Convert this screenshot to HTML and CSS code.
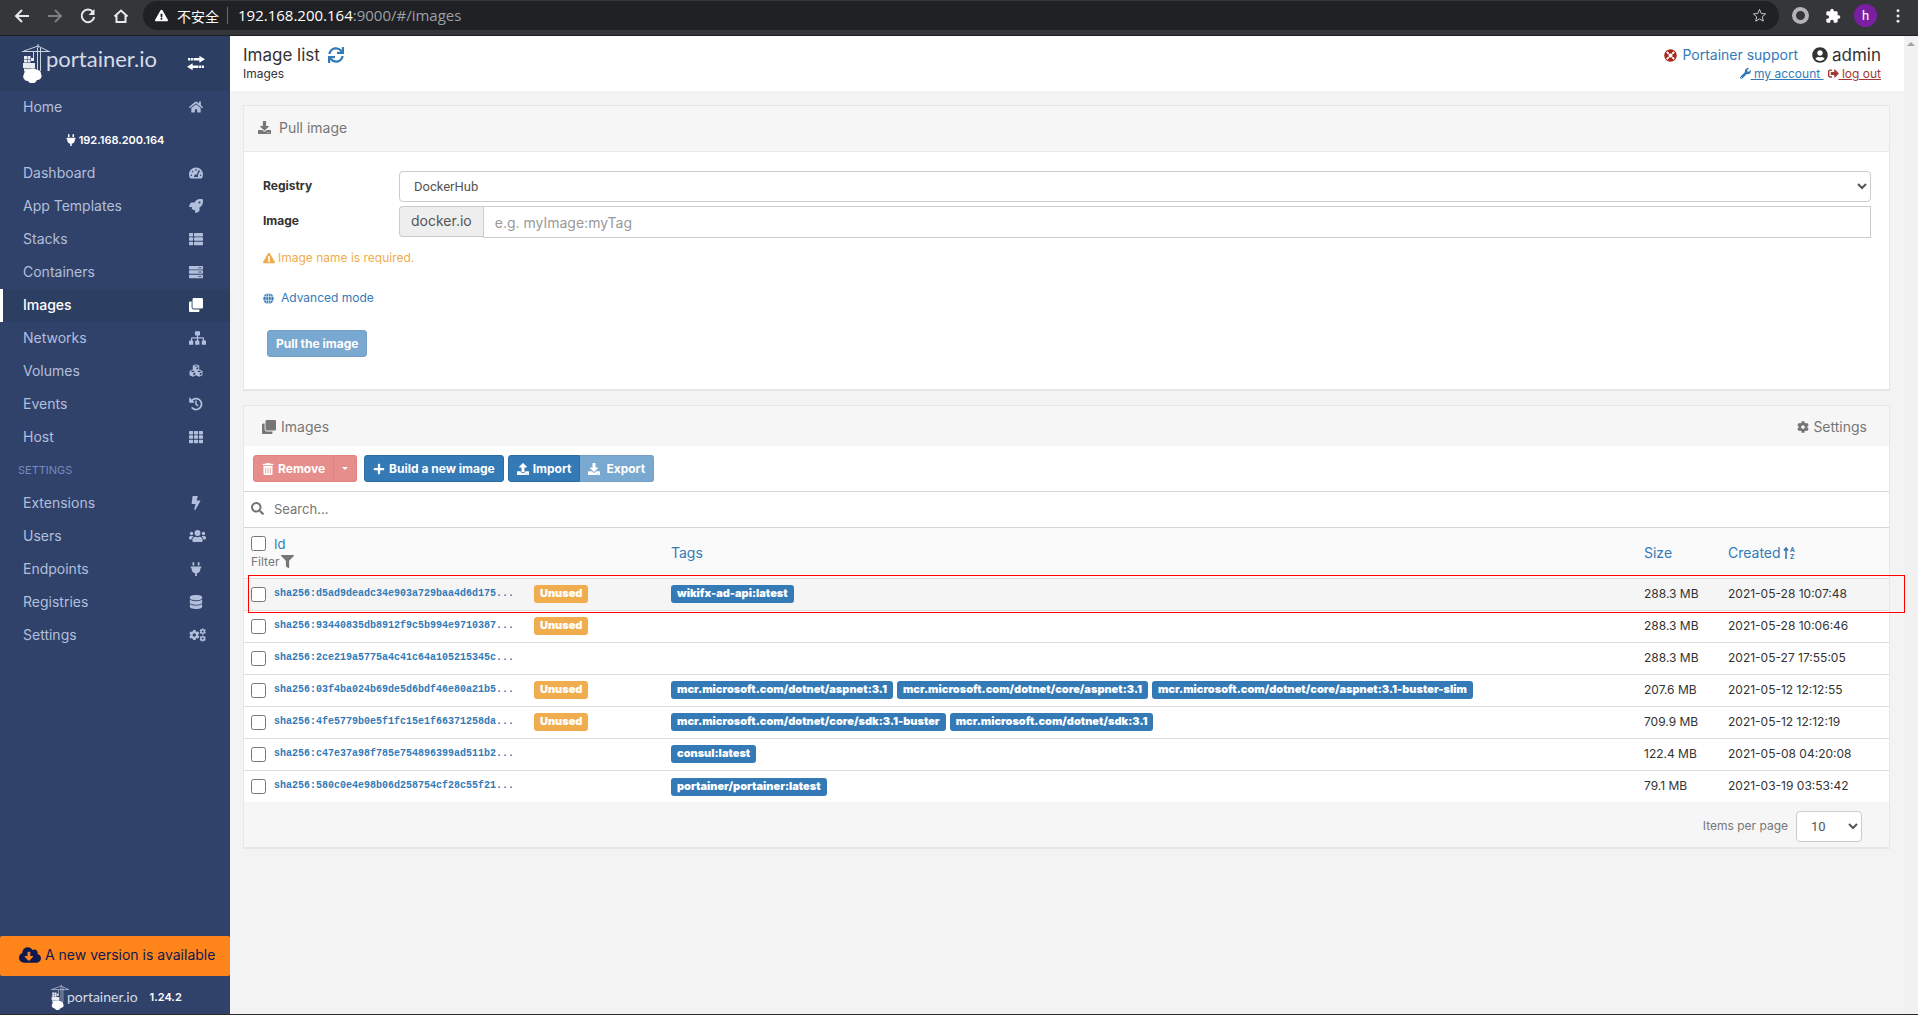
FILE: index.html
```html
<!DOCTYPE html>
<html lang="en">
<head>
<meta charset="utf-8">
<title>Portainer</title>
<link rel="stylesheet" href="styles.css">
</head>
<body>
<svg class="sprite" aria-hidden="true">
  <symbol id="i-home" viewBox="0 0 576 512"><path d="M280.37 148.26L96 300.11V464a16 16 0 0 0 16 16l112.06-.29a16 16 0 0 0 15.92-16V368a16 16 0 0 1 16-16h64a16 16 0 0 1 16 16v95.64a16 16 0 0 0 16 16.05L464 480a16 16 0 0 0 16-16V300L295.67 148.26a12.19 12.19 0 0 0-15.3 0zM571.6 251.47L488 182.56V44.05a12 12 0 0 0-12-12h-56a12 12 0 0 0-12 12v72.61L318.47 43a48 48 0 0 0-61 0L4.34 251.47a12 12 0 0 0-1.6 16.9l25.5 31A12 12 0 0 0 45.15 301l235.22-193.74a12.19 12.19 0 0 1 15.3 0L530.9 301a12 12 0 0 0 16.9-1.6l25.5-31a12 12 0 0 0-1.7-16.93z"/></symbol>
  <symbol id="i-exchange" viewBox="0 0 512 512"><path d="M30 184v-68h60v68zM108 184v-68h60v68zM186 184v-68h166V50l160 100-160 100v-66zM482 396v-68h-60v68zM404 396v-68h-60v68zM326 396v-68H160v-66L0 362l160 100v-66z"/></symbol>
  <symbol id="i-sync" viewBox="0 0 512 512"><path d="M440.65 12.57l4 82.77A247.16 247.16 0 0 0 255.83 8C134.73 8 33.91 94.92 12.29 209.82A12 12 0 0 0 24.09 224h49.05a12 12 0 0 0 11.67-9.26 175.91 175.91 0 0 1 317-56.94l-101.46-4.86a12 12 0 0 0-12.57 12v47.41a12 12 0 0 0 12 12H500a12 12 0 0 0 12-12V12a12 12 0 0 0-12-12h-47.37a12 12 0 0 0-11.98 12.57zM255.83 432a175.61 175.61 0 0 1-146-77.8l101.8 4.87a12 12 0 0 0 12.57-12v-47.4a12 12 0 0 0-12-12H12a12 12 0 0 0-12 12V500a12 12 0 0 0 12 12h47.35a12 12 0 0 0 12-12.6l-4.15-82.57A247.17 247.17 0 0 0 255.83 504c121.11 0 221.93-86.92 243.55-201.82a12 12 0 0 0-11.8-14.18h-49.05a12 12 0 0 0-11.67 9.26A175.86 175.86 0 0 1 255.83 432z"/></symbol>
  <symbol id="i-dash" viewBox="0 0 576 512"><path fill-rule="evenodd" d="M288 32C129 32 0 161 0 320c0 53 14 102 39 145 6 9 16 15 27 15h444c11 0 21-6 27-15 25-43 39-92 39-145C576 161 447 32 288 32zM288 96a32 32 0 1 1 0 64 32 32 0 0 1 0-64zM96 384a32 32 0 1 1 0-64 32 32 0 0 1 0 64zM144 224a32 32 0 1 1 0-64 32 32 0 0 1 0 64zM391 134l45 16-73 221c7 12 9 29 4 45H212c-10-50 22-96 76-96 11 0 22 3 32 7zM480 384a32 32 0 1 1 0-64 32 32 0 0 1 0 64zM434 224a32 32 0 1 1 0-64 32 32 0 0 1 0 64z"/></symbol>
  <symbol id="i-rocket" viewBox="0 0 512 512"><path d="M505.12 19.09c-1.19-5.53-6.66-11-12.21-12.18C460.72 0 435.5 0 410.4 0 307.18 0 245.27 55.2 199.05 128H94.84c-16.35 0-35.56 11.88-42.89 26.48L2.52 253.3A28.4 28.4 0 0 0 0 264a24 24 0 0 0 24 24h103.8l-22.47 22.47c-11.36 11.36-13 32.26 0 45.25l50.9 50.9c11.16 11.2 32.16 13.16 45.28 0L224 384.16V488a24 24 0 0 0 24 24 28.56 28.56 0 0 0 10.7-2.52l98.73-49.39c14.63-7.3 26.51-26.5 26.51-42.86V312.8c72.6-46.31 128.03-108.4 128.03-211.1.1-25.2.1-50.4-6.85-82.61zM384 168a40 40 0 1 1 40-40 40 40 0 0 1-40 40z"/></symbol>
  <symbol id="i-list" viewBox="0 0 512 512"><path d="M24 32h102q24 0 24 24v80q0 24-24 24H24q-24 0-24-24V56q0-24 24-24zM206 32h282q24 0 24 24v80q0 24-24 24H206q-24 0-24-24V56q0-24 24-24zM24 192h102q24 0 24 24v80q0 24-24 24H24q-24 0-24-24v-80q0-24 24-24zM206 192h282q24 0 24 24v80q0 24-24 24H206q-24 0-24-24v-80q0-24 24-24zM24 352h102q24 0 24 24v80q0 24-24 24H24q-24 0-24-24v-80q0-24 24-24zM206 352h282q24 0 24 24v80q0 24-24 24H206q-24 0-24-24v-80q0-24 24-24z"/></symbol>
  <symbol id="i-server" viewBox="0 0 512 512"><path fill-rule="evenodd" d="M24 32h464q24 0 24 24v80q0 24-24 24H24q-24 0-24-24V56q0-24 24-24zM408 96a24 24 0 1 0 48 0 24 24 0 0 0-48 0zM344 96a24 24 0 1 0 48 0 24 24 0 0 0-48 0zM24 192h464q24 0 24 24v80q0 24-24 24H24q-24 0-24-24v-80q0-24 24-24zM408 256a24 24 0 1 0 48 0 24 24 0 0 0-48 0zM344 256a24 24 0 1 0 48 0 24 24 0 0 0-48 0zM24 352h464q24 0 24 24v80q0 24-24 24H24q-24 0-24-24v-80q0-24 24-24zM408 416a24 24 0 1 0 48 0 24 24 0 0 0-48 0zM344 416a24 24 0 1 0 48 0 24 24 0 0 0-48 0z"/></symbol>
  <symbol id="i-clone" viewBox="0 0 512 512"><path d="M464 0c26.5 0 48 21.5 48 48v288c0 26.5-21.5 48-48 48H176c-26.5 0-48-21.5-48-48V48c0-26.5 21.5-48 48-48h288M176 416c-44 0-80-36-80-80V128H48c-26.5 0-48 21.5-48 48v288c0 26.5 21.5 48 48 48h288c26.5 0 48-21.5 48-48v-48H176z"/></symbol>
  <symbol id="i-sitemap" viewBox="0 0 640 512"><path d="M248 0h144q24 0 24 24v112q0 24-24 24h-48v64h176q48 0 48 48v80h48q24 0 24 24v112q0 24-24 24H504q-24 0-24-24V376q0-24 24-24h16v-80H344v80h24q24 0 24 24v112q0 24-24 24H256q-24 0-24-24V376q0-24 24-24h40v-80H120v80h16q24 0 24 24v112q0 24-24 24H24q-24 0-24-24V376q0-24 24-24h48v-80q0-48 48-48h176v-64h-48q-24 0-24-24V24q0-24 24-24z"/></symbol>
  <symbol id="i-cubes" viewBox="0 0 512 512"><path fill-rule="evenodd" d="M256 8l118 46v150l118 48v156l-118 60-118-58-118 58L20 408V252l118-48V54zM256 44l-76 30 76 30 76-30zM276 138v72l64-26v-72zM138 240l-78 30 78 32 78-32zM158 338v82l72-36v-76zM374 240l-78 30 78 32 78-32zM394 338v82l64-34v-74z"/></symbol>
  <symbol id="i-history" viewBox="0 0 512 512"><path d="M90 150A200 200 0 1 1 116 398" fill="none" stroke="currentColor" stroke-width="64" stroke-linecap="round"/><path d="M8 24q0-16 14-10l172 172q8 22-14 22H24q-16 0-16-16zM228 128h56v122l66 52-34 44-88-68z"/></symbol>
  <symbol id="i-th" viewBox="0 0 512 512"><path d="M24 32h102q24 0 24 24v80q0 24-24 24H24q-24 0-24-24V56q0-24 24-24zM205 32h102q24 0 24 24v80q0 24-24 24H205q-24 0-24-24V56q0-24 24-24zM386 32h102q24 0 24 24v80q0 24-24 24H386q-24 0-24-24V56q0-24 24-24zM24 192h102q24 0 24 24v80q0 24-24 24H24q-24 0-24-24v-80q0-24 24-24zM205 192h102q24 0 24 24v80q0 24-24 24H205q-24 0-24-24v-80q0-24 24-24zM386 192h102q24 0 24 24v80q0 24-24 24H386q-24 0-24-24v-80q0-24 24-24zM24 352h102q24 0 24 24v80q0 24-24 24H24q-24 0-24-24v-80q0-24 24-24zM205 352h102q24 0 24 24v80q0 24-24 24H205q-24 0-24-24v-80q0-24 24-24zM386 352h102q24 0 24 24v80q0 24-24 24H386q-24 0-24-24v-80q0-24 24-24z"/></symbol>
  <symbol id="i-bolt" viewBox="0 0 320 512"><path d="M296 160H180.6l42.6-129.8C227.2 15 215.7 0 200 0H56C44 0 33.8 8.9 32.2 20.8l-32 240C-1.7 275.2 9.5 288 24 288h118.7L96.6 482.5c-3.6 15.2 8 29.5 23.3 29.5 8.4 0 16.4-4.4 20.8-12l176-304c9.3-15.9-2.2-36-20.7-36z"/></symbol>
  <symbol id="i-users" viewBox="0 0 640 512"><path d="M96 224a64 64 0 1 0 0-128 64 64 0 0 0 0 128zM544 224a64 64 0 1 0 0-128 64 64 0 0 0 0 128zM320 256a112 112 0 1 0 0-224 112 112 0 0 0 0 224zM64 256h64c18 0 34 7 45 19-40 22-69 62-75 109H32c-18 0-32-14-32-32v-32c0-35 29-64 64-64zM576 256h-64c-18 0-34 7-45 19 40 22 69 62 75 109h66c18 0 32-14 32-32v-32c0-35-29-64-64-64zM243 288c48 22 106 22 154 0 64 0 115 52 115 115v29c0 26-22 48-48 48H176c-26 0-48-22-48-48v-29c0-63 51-115 115-115z"/></symbol>
  <symbol id="i-plug" viewBox="0 0 384 512"><path d="M320 32a32 32 0 0 0-64 0v96h64zm48 128H16a16 16 0 0 0-16 16v32a16 16 0 0 0 16 16h16v32a160 160 0 0 0 128 156.8V512h64v-99.2A160 160 0 0 0 352 256v-32h16a16 16 0 0 0 16-16v-32a16 16 0 0 0-16-16zM128 32a32 32 0 0 0-64 0v96h64z"/></symbol>
  <symbol id="i-db" viewBox="0 0 448 512"><path d="M448 73.143v45.714C448 159.143 347.667 192 224 192S0 159.143 0 118.857V73.143C0 32.857 100.333 0 224 0s224 32.857 224 73.143zM448 176v102.857C448 319.143 347.667 352 224 352S0 319.143 0 278.857V176c48.125 33.143 136.208 48.572 224 48.572S399.874 209.143 448 176zm0 160v102.857C448 479.143 347.667 512 224 512S0 479.143 0 438.857V336c48.125 33.143 136.208 48.572 224 48.572S399.874 369.143 448 336z"/></symbol>
  <symbol id="i-cog" viewBox="0 0 512 512"><path d="M487.4 315.7l-42.6-24.6c4.3-23.2 4.3-47 0-70.2l42.6-24.6c4.9-2.8 7.1-8.6 5.5-14-11.1-35.6-30-67.8-54.7-94.6-3.8-4.1-10-5.1-14.8-2.3L380.8 110c-17.9-15.4-38.5-27.3-60.8-35.1V25.8c0-5.6-3.9-10.5-9.4-11.7-36.7-8.2-74.3-7.8-109.2 0-5.5 1.2-9.4 6.1-9.4 11.7V75c-22.2 7.9-42.8 19.8-60.8 35.1L88.7 85.5c-4.9-2.8-11-1.9-14.8 2.3-24.7 26.7-43.6 58.9-54.7 94.6-1.7 5.4.6 11.2 5.5 14L67.3 221c-4.3 23.2-4.3 47 0 70.2l-42.6 24.6c-4.9 2.8-7.1 8.6-5.5 14 11.1 35.6 30 67.8 54.7 94.6 3.8 4.1 10 5.1 14.8 2.3l42.6-24.6c17.9 15.4 38.5 27.3 60.8 35.1v49.2c0 5.6 3.9 10.5 9.4 11.7 36.7 8.2 74.3 7.8 109.2 0 5.5-1.2 9.4-6.1 9.4-11.7v-49.2c22.2-7.9 42.8-19.8 60.8-35.1l42.6 24.6c4.9 2.8 11 1.9 14.8-2.3 24.7-26.7 43.6-58.9 54.7-94.6 1.5-5.5-.7-11.3-5.6-14.1zM256 336c-44.1 0-80-35.9-80-80s35.9-80 80-80 80 35.9 80 80-35.9 80-80 80z"/></symbol>
  <symbol id="i-cogs" viewBox="0 0 640 512"><use href="#i-cog" x="0" y="56" width="400" height="400"/><use href="#i-cog" x="392" y="0" width="248" height="248"/><use href="#i-cog" x="392" y="264" width="248" height="248"/></symbol>
  <symbol id="i-download" viewBox="0 0 512 512"><path d="M216 0h80c13.3 0 24 10.7 24 24v168h87.7c17.8 0 26.7 21.5 14.1 34.1L269.7 378.3c-7.5 7.5-19.8 7.5-27.3 0L90.1 226.1c-12.6-12.6-3.7-34.1 14.1-34.1H192V24c0-13.3 10.7-24 24-24zm296 376v112c0 13.3-10.7 24-24 24H24c-13.3 0-24-10.7-24-24V376c0-13.3 10.7-24 24-24h146.7l49 49c20.1 20.1 52.5 20.1 72.6 0l49-49H488c13.3 0 24 10.7 24 24zm-124 88c0-11-9-20-20-20s-20 9-20 20 9 20 20 20 20-9 20-20zm64 0c0-11-9-20-20-20s-20 9-20 20 9 20 20 20 20-9 20-20z"/></symbol>
  <symbol id="i-upload" viewBox="0 0 512 512"><path d="M296 384h-80c-13.3 0-24-10.7-24-24V192h-87.7c-17.8 0-26.7-21.5-14.1-34.1L242.3 5.7c7.5-7.5 19.8-7.5 27.3 0l152.2 152.2c12.6 12.6 3.7 34.1-14.1 34.1H320v168c0 13.3-10.7 24-24 24zm216-8v112c0 13.3-10.7 24-24 24H24c-13.3 0-24-10.7-24-24V376c0-13.3 10.7-24 24-24h136v8c0 30.9 25.1 56 56 56h80c30.9 0 56-25.1 56-56v-8h136c13.3 0 24 10.7 24 24zm-124 88c0-11-9-20-20-20s-20 9-20 20 9 20 20 20 20-9 20-20zm64 0c0-11-9-20-20-20s-20 9-20 20 9 20 20 20 20-9 20-20z"/></symbol>
  <symbol id="i-warn" viewBox="0 0 576 512"><path d="M569.517 440.013C587.975 472.007 564.806 512 527.94 512H48.054c-36.937 0-59.999-40.055-41.577-71.987L246.423 23.985c18.467-32.009 64.72-31.951 83.154 0l239.94 416.028zM288 354c-25.405 0-46 20.595-46 46s20.595 46 46 46 46-20.595 46-46-20.595-46-46-46zm-43.673-165.346l7.418 136c.347 6.364 5.609 11.346 11.982 11.346h48.546c6.373 0 11.635-4.982 11.982-11.346l7.418-136c.375-6.874-5.098-12.654-11.982-12.654h-63.383c-6.884 0-12.356 5.78-11.981 12.654z"/></symbol>
  <symbol id="i-globe" viewBox="0 0 16 16"><circle cx="8" cy="8" r="7.6"/><path d="M8 0v16M0 5.3h16M0 10.7h16" fill="none" stroke="#fff" stroke-width=".9"/><ellipse cx="8" cy="8" rx="3.8" ry="7.6" fill="none" stroke="#fff" stroke-width=".9"/></symbol>
  <symbol id="i-search" viewBox="0 0 512 512"><path d="M505 442.7L405.3 343c-4.5-4.5-10.6-7-17-7H372c27.6-35.3 44-79.7 44-128C416 93.1 322.9 0 208 0S0 93.1 0 208s93.1 208 208 208c48.3 0 92.7-16.4 128-44v16.3c0 6.4 2.5 12.5 7 17l99.7 99.7c9.4 9.4 24.6 9.4 33.9 0l28.3-28.3c9.4-9.4 9.4-24.6.1-34zM208 336c-70.7 0-128-57.2-128-128 0-70.7 57.2-128 128-128 70.7 0 128 57.2 128 128 0 70.7-57.2 128-128 128z"/></symbol>
  <symbol id="i-filter" viewBox="0 0 512 512"><path d="M487.976 0H24.028C2.71 0-8.047 25.866 7.058 40.971L192 225.941V432c0 7.831 3.821 15.17 10.237 19.662l80 55.98C298.02 518.69 320 507.493 320 487.98V225.941l184.947-184.97C520.021 25.896 509.338 0 487.976 0z"/></symbol>
  <symbol id="i-plus" viewBox="0 0 448 512"><path d="M416 208H272V64c0-17.7-14.3-32-32-32h-32c-17.7 0-32 14.3-32 32v144H32c-17.7 0-32 14.3-32 32v32c0 17.7 14.3 32 32 32h144v144c0 17.7 14.3 32 32 32h32c17.7 0 32-14.3 32-32V304h144c17.7 0 32-14.3 32-32v-32c0-17.7-14.3-32-32-32z"/></symbol>
  <symbol id="i-trash" viewBox="0 0 448 512"><path d="M32 464a48 48 0 0 0 48 48h288a48 48 0 0 0 48-48V128H32zm272-256a16 16 0 0 1 32 0v224a16 16 0 0 1-32 0zm-96 0a16 16 0 0 1 32 0v224a16 16 0 0 1-32 0zm-96 0a16 16 0 0 1 32 0v224a16 16 0 0 1-32 0zM432 32H312l-9.4-18.7A24 24 0 0 0 281.1 0H166.8a23.72 23.72 0 0 0-21.4 13.3L136 32H16A16 16 0 0 0 0 48v32a16 16 0 0 0 16 16h416a16 16 0 0 0 16-16V48a16 16 0 0 0-16-16z"/></symbol>
  <symbol id="i-user" viewBox="0 0 496 512"><path d="M248 8C111 8 0 119 0 256s111 248 248 248 248-111 248-248S385 8 248 8zm0 96c48.6 0 88 39.4 88 88s-39.4 88-88 88-88-39.4-88-88 39.4-88 88-88zm0 344c-58.7 0-111.3-26.6-146.5-68.2 18.8-35.4 55.6-59.8 98.5-59.8 2.4 0 4.8.4 7.1 1.1 13 4.2 26.6 6.9 40.9 6.9 14.3 0 28-2.7 40.9-6.9 2.3-.7 4.7-1.1 7.1-1.1 42.9 0 79.7 24.4 98.5 59.8C359.3 421.4 306.7 448 248 448z"/></symbol>
  <symbol id="i-wrench" viewBox="0 0 512 512"><path d="M507.73 109.1c-2.24-9.03-13.54-12.09-20.12-5.51l-74.36 74.36-67.88-11.31-11.31-67.88 74.36-74.36c6.62-6.62 3.43-17.9-5.66-20.16-47.38-11.74-99.55.91-136.58 37.93-39.64 39.64-50.55 97.1-34.05 147.2L18.74 402.76c-24.99 24.99-24.99 65.51 0 90.5 24.99 24.99 65.51 24.99 90.5 0l213.21-213.21c50.12 16.71 107.47 5.68 147.37-34.22 37.07-37.07 49.7-89.32 37.91-136.73zM64 472c-13.25 0-24-10.75-24-24 0-13.26 10.75-24 24-24s24 10.74 24 24c0 13.25-10.75 24-24 24z"/></symbol>
  <symbol id="i-logout" viewBox="0 0 512 512"><path d="M497 273L329 441c-15 15-41 4.5-41-17v-96H152c-13.3 0-24-10.7-24-24v-96c0-13.3 10.7-24 24-24h136V88c0-21.4 25.9-32 41-17l168 168c9.3 9.4 9.3 24.6 0 34zM192 436v-40c0-6.6-5.4-12-12-12H96c-17.7 0-32-14.3-32-32V160c0-17.7 14.3-32 32-32h84c6.6 0 12-5.4 12-12V76c0-6.6-5.4-12-12-12H96c-53 0-96 43-96 96v192c0 53 43 96 96 96h84c6.6 0 12-5.4 12-12z"/></symbol>
  <symbol id="i-ring" viewBox="0 0 16 16"><circle cx="8" cy="8" r="7.7"/><path d="M3.4 3.4l2.6 2.600M12.600 3.400L10 6M3.400 12.600L6 10M12.600 12.600L10 10" fill="none" stroke="#fff" stroke-width="2.200"/><circle cx="8" cy="8" r="2.400" fill="#fff"/></symbol>
  <symbol id="i-cloud" viewBox="0 0 640 512"><path d="M537.6 226.6c4.1-10.7 6.4-22.4 6.4-34.6 0-53-43-96-96-96-19.7 0-38.1 6-53.3 16.2C367 64.2 315.3 32 256 32c-88.4 0-160 71.6-160 160 0 2.7.1 5.4.2 8.1C40.2 219.8 0 273.2 0 336c0 79.5 64.5 144 144 144h368c70.7 0 128-57.3 128-128 0-61.9-44-113.6-102.4-125.4zm-132.9 88.7L299.3 420.7c-6.2 6.2-16.4 6.2-22.6 0L171.3 315.3c-10.1-10.1-2.9-27.3 11.3-27.3H248V176c0-8.8 7.2-16 16-16h48c8.8 0 16 7.2 16 16v112h65.4c14.2 0 21.4 17.2 11.3 27.3z"/></symbol>
  <symbol id="i-crane" viewBox="0 0 28 40"><path d="M16 1v4M0 8.500h28M2 8L16 3l11 5.500M15.500 5v23M18.500 5v23M11.500 9v6" fill="none" stroke="currentColor" stroke-width="1"/><path d="M2 13h3v3H2zM5.500 13h3v3h-3zM9 15h3v3H9zM2 16.500h3v3H2zM5.500 16.500h3v3h-3zM1 20h12v5H1zM2 25.500h10v3H2z" fill="#e8ebf2"/><path d="M6 38a4.500 4.500 0 0 1-4-7 4.500 4.500 0 0 1 6-4 5 5 0 0 1 7 0 4 4 0 0 1 4 4 4 4 0 0 1-4 6 5 5 0 0 1-9 1z" fill="#fff"/></symbol>
</svg>

<header class="browser">
  <button class="nav-btn" aria-label="Back"><svg viewBox="0 0 16 16"><path d="M15 8H2M8 2L2 8l6 6"/></svg></button>
  <button class="nav-btn off" aria-label="Forward"><svg viewBox="0 0 16 16"><path d="M1 8h13M8 2l6 6-6 6"/></svg></button>
  <button class="nav-btn" aria-label="Reload"><svg viewBox="0 0 16 16"><path d="M13 4A6.3 6.3 0 1 0 14.2 9"/><path d="M14.500 1v6h-6z" fill="currentColor" stroke="none"/></svg></button>
  <button class="nav-btn" aria-label="Home page"><svg viewBox="0 0 16 16"><path d="M1.500 8.500L8 2.500l6.500 6M3.500 7.500V14h9V7.500"/></svg></button>
  <div class="address">
    <svg class="icon addr-warn"><use href="#i-warn"/></svg>
    <span class="insecure">不安全</span>
    <span class="url"><b>192.168.200.164</b>:9000/#/images</span>
    <svg class="star" viewBox="0 0 16 16"><path d="M8 1.500l1.900 4.400 4.600.4-3.500 3.100 1 4.600-4-2.400-4 2.400 1-4.600L1.500 6.300l4.600-.4z"/></svg>
  </div>
  <span class="ext-ring"></span>
  <svg class="puzzle" viewBox="0 0 24 24"><path d="M20.500 11H19V7c0-1.100-.9-2-2-2h-4V3.500a2.500 2.500 0 0 0-5 0V5H4c-1.100 0-2 .9-2 2v3.800h1.500a2.700 2.700 0 0 1 0 5.400H2V20c0 1.100.9 2 2 2h3.800v-1.500a2.700 2.700 0 0 1 5.400 0V22H17c1.100 0 2-.9 2-2v-4h1.500a2.500 2.500 0 0 0 0-5z"/></svg>
  <span class="avatar">h</span>
  <svg class="dots" viewBox="0 0 4 16"><circle cx="2" cy="2" r="1.700"/><circle cx="2" cy="8" r="1.700"/><circle cx="2" cy="14" r="1.700"/></svg>
</header>

<div class="app">
  <nav class="sidebar">
    <div class="brand"><svg class="crane"><use href="#i-crane"/></svg><span class="brand-name">portainer.io</span><svg class="icon toggle"><use href="#i-exchange"/></svg></div>
    <ul class="menu">
      <li><a href="#">Home<svg class="icon"><use href="#i-home"/></svg></a></li>
      <li class="endpoint"><svg class="icon"><use href="#i-plug"/></svg>192.168.200.164</li>
      <li><a href="#">Dashboard<svg class="icon"><use href="#i-dash"/></svg></a></li>
      <li><a href="#">App Templates<svg class="icon"><use href="#i-rocket"/></svg></a></li>
      <li><a href="#">Stacks<svg class="icon"><use href="#i-list"/></svg></a></li>
      <li><a href="#">Containers<svg class="icon"><use href="#i-server"/></svg></a></li>
      <li><a href="#" class="active">Images<svg class="icon"><use href="#i-clone"/></svg></a></li>
      <li><a href="#">Networks<svg class="icon wide"><use href="#i-sitemap"/></svg></a></li>
      <li><a href="#">Volumes<svg class="icon"><use href="#i-cubes"/></svg></a></li>
      <li><a href="#">Events<svg class="icon"><use href="#i-history"/></svg></a></li>
      <li><a href="#">Host<svg class="icon"><use href="#i-th"/></svg></a></li>
      <li class="section">SETTINGS</li>
      <li><a href="#">Extensions<svg class="icon"><use href="#i-bolt"/></svg></a></li>
      <li><a href="#">Users<svg class="icon wide"><use href="#i-users"/></svg></a></li>
      <li><a href="#">Endpoints<svg class="icon"><use href="#i-plug"/></svg></a></li>
      <li><a href="#">Registries<svg class="icon"><use href="#i-db"/></svg></a></li>
      <li><a href="#">Settings<svg class="icon wide"><use href="#i-cogs"/></svg></a></li>
    </ul>
    <a href="#" class="update"><svg class="icon"><use href="#i-cloud"/></svg>A new version is available</a>
    <div class="side-foot"><svg class="crane"><use href="#i-crane"/></svg><span class="brand-name">portainer.io</span><span class="version">1.24.2</span></div>
  </nav>

  <main class="main">
    <div class="page-head">
      <div>
        <h1>Image list <svg class="icon refresh"><use href="#i-sync"/></svg></h1>
        <div class="crumb">Images</div>
      </div>
      <div class="user">
        <div class="user-top"><a href="#" class="support"><svg class="icon ring"><use href="#i-ring"/></svg>Portainer support</a><span class="who"><svg class="icon"><use href="#i-user"/></svg>admin</span></div>
        <div class="user-links"><a href="#"><svg class="icon"><use href="#i-wrench"/></svg>&nbsp;my account&nbsp;</a><a href="#" class="logout"><svg class="icon"><use href="#i-logout"/></svg>&nbsp;log out</a></div>
      </div>
    </div>

    <section class="widget">
      <h2 class="widget-head"><svg class="icon"><use href="#i-download"/></svg>Pull image</h2>
      <form class="pull">
        <div class="field">
          <label for="registry">Registry</label>
          <select id="registry" class="select"><option>DockerHub</option></select>
        </div>
        <div class="field">
          <label for="image">Image</label>
          <div class="group"><span class="addon">docker.io</span><input id="image" type="text" placeholder="e.g. myImage:myTag"></div>
        </div>
        <p class="warning"><svg class="icon"><use href="#i-warn"/></svg>Image name is required.</p>
        <p class="advanced"><a href="#"><svg class="icon"><use href="#i-globe"/></svg>Advanced mode</a></p>
        <button type="button" class="btn primary faded pull-btn">Pull the image</button>
      </form>
    </section>

    <section class="widget">
      <div class="table-head"><h2><svg class="icon"><use href="#i-clone"/></svg>Images</h2><a href="#" class="table-settings"><svg class="icon"><use href="#i-cog"/></svg>Settings</a></div>
      <div class="actions">
        <div class="btn-group faded"><button class="btn danger"><svg class="icon"><use href="#i-trash"/></svg>Remove</button><button class="btn danger caret-btn" aria-label="More"><span class="caret"></span></button></div>
        <button class="btn primary"><svg class="icon"><use href="#i-plus"/></svg>Build a new image</button>
        <div class="btn-group"><button class="btn primary"><svg class="icon"><use href="#i-upload"/></svg>Import</button><button class="btn primary faded export"><svg class="icon"><use href="#i-download"/></svg>Export</button></div>
      </div>
      <div class="search"><svg class="icon"><use href="#i-search"/></svg><input type="text" placeholder="Search..." aria-label="Search"></div>
      <table class="images">
        <colgroup><col class="c-id"><col><col class="c-size"><col class="c-created"></colgroup>
        <thead>
          <tr>
            <th><div class="id-head"><input type="checkbox" id="all"><label for="all">Id</label></div><div class="filter">Filter<svg class="icon"><use href="#i-filter"/></svg></div></th>
            <th><a href="#">Tags</a></th>
            <th><a href="#">Size</a></th>
            <th><a href="#">Created <svg class="sort" viewBox="0 0 14 14"><path d="M3 13V2M1 4.500L3 2l2 2.500" fill="none" stroke="currentColor" stroke-width="1.600"/><text x="7" y="6">A</text><text x="7" y="13">Z</text></svg></a></th>
          </tr>
        </thead>
        <tbody>
          <tr class="marked"><td><div class="id"><input type="checkbox" aria-label="Select image"><a href="#">sha256:d5ad9deadc34e903a729baa4d6d175...</a><span class="label unused">Unused</span></div></td><td><span class="label">wikifx-ad-api:latest</span></td><td>288.3 MB</td><td>2021-05-28 10:07:48<span class="outline"></span></td></tr>
          <tr><td><div class="id"><input type="checkbox" aria-label="Select image"><a href="#">sha256:93440835db8912f9c5b994e9710387...</a><span class="label unused">Unused</span></div></td><td></td><td>288.3 MB</td><td>2021-05-28 10:06:46</td></tr>
          <tr><td><div class="id"><input type="checkbox" aria-label="Select image"><a href="#">sha256:2ce219a5775a4c41c64a105215345c...</a></div></td><td></td><td>288.3 MB</td><td>2021-05-27 17:55:05</td></tr>
          <tr><td><div class="id"><input type="checkbox" aria-label="Select image"><a href="#">sha256:03f4ba024b69de5d6bdf46e80a21b5...</a><span class="label unused">Unused</span></div></td><td><span class="label">mcr.microsoft.com/dotnet/aspnet:3.1</span><span class="label">mcr.microsoft.com/dotnet/core/aspnet:3.1</span><span class="label">mcr.microsoft.com/dotnet/core/aspnet:3.1-buster-slim</span></td><td>207.6 MB</td><td>2021-05-12 12:12:55</td></tr>
          <tr><td><div class="id"><input type="checkbox" aria-label="Select image"><a href="#">sha256:4fe5779b0e5f1fc15e1f66371258da...</a><span class="label unused">Unused</span></div></td><td><span class="label">mcr.microsoft.com/dotnet/core/sdk:3.1-buster</span><span class="label">mcr.microsoft.com/dotnet/sdk:3.1</span></td><td>709.9 MB</td><td>2021-05-12 12:12:19</td></tr>
          <tr><td><div class="id"><input type="checkbox" aria-label="Select image"><a href="#">sha256:c47e37a98f785e754896399ad511b2...</a></div></td><td><span class="label">consul:latest</span></td><td>122.4 MB</td><td>2021-05-08 04:20:08</td></tr>
          <tr><td><div class="id"><input type="checkbox" aria-label="Select image"><a href="#">sha256:580c0e4e98b06d258754cf28c55f21...</a></div></td><td><span class="label">portainer/portainer:latest</span></td><td>79.1 MB</td><td>2021-03-19 03:53:42</td></tr>
        </tbody>
      </table>
      <div class="table-foot"><label for="per-page">Items per page</label><select id="per-page" class="select"><option>10</option></select></div>
    </section>
  </main>
  <div class="scrollbar"><span class="arrow"></span></div>
</div>
</body>
</html>
```

FILE: styles.css
```css
* { box-sizing: border-box; }

body {
  margin: 0;
  min-height: 100vh;
  display: flex;
  flex-direction: column;
  background: #f3f3f3;
  border-bottom: 1px solid #2a2a26;
  color: #333;
  font: 12px/18px Inter, "Noto Sans CJK SC", sans-serif;
}

h1, h2, p, ul { margin: 0; padding: 0; font-weight: 400; }
ul { list-style: none; }
a { color: #337ab7; text-decoration: none; }
button, input, select { font-family: inherit; margin: 0; }
.sprite { display: none; }
.icon { width: 14px; height: 14px; flex: none; fill: currentColor; }

/* Browser toolbar */
.browser {
  display: flex;
  align-items: center;
  height: 36px;
  padding: 0 18px 4px 14px;
  background: #35363a;
  border-bottom: 1px solid #202124;
  color: #fff;
}
.nav-btn { width: 17px; height: 16px; margin-right: 16px; padding: 0; border: 0; background: none; color: #e8eaed; }
.nav-btn svg { display: block; width: 16px; height: 16px; fill: none; stroke: currentColor; stroke-width: 2; }
.nav-btn.off { color: #7d7e81; }
.address {
  flex: 1;
  display: flex;
  align-items: center;
  height: 29px;
  margin-left: -3px;
  padding: 0 12px;
  border-radius: 15px;
  background: #202124;
}
.addr-warn { width: 13px; height: 13px; }
.insecure { margin: 0 8px 0 9px; font: 14px/16px "Noto Sans CJK SC", sans-serif; }
.url { padding-left: 10px; border-left: 1px solid #6b6c6f; color: #9aa0a6; font: 15px/17px "Open Sans", sans-serif; }
.url b { color: #fff; font-weight: 400; }
.star { width: 15px; height: 15px; margin-left: auto; fill: none; stroke: #d0d2d5; stroke-width: 1; }
.ext-ring { width: 17px; height: 17px; margin: 0 16px 0 13px; border: 4px solid #b4b4b4; border-radius: 50%; }
.puzzle { width: 16px; height: 16px; margin-right: 13px; fill: #fff; }
.avatar { width: 23px; height: 23px; margin-right: 19px; border-radius: 50%; background: #7b1fa2; font: 13px/23px Roboto, sans-serif; text-align: center; }
.dots { width: 4px; height: 14px; fill: #e8eaed; }

/* Layout */
.app { flex: 1; display: flex; align-items: stretch; }
.main { flex: 1; min-width: 0; }
.scrollbar { width: 14px; background: #f1f1f1; padding-top: 6px; }
.arrow { display: block; margin: 0 auto; width: 0; border: 4px solid transparent; border-top-width: 0; border-bottom-color: #a3a3a3; }

/* Sidebar */
.sidebar { width: 230px; display: flex; flex-direction: column; background: #30426a; color: #b2bfdc; }
.brand { display: flex; align-items: center; height: 55px; padding: 0 25px 2px 22px; background: #2d3e63; }
.crane { width: 28px; height: 40px; fill: currentColor; color: #ccd3e1; }
.brand-name { margin-left: -4px; color: #d5dae6; font: 22px/28px Lato, sans-serif; }
.brand .brand-name { padding-bottom: 8px; }
.toggle { width: 18px; height: 18px; margin-left: auto; }
.brand .toggle { color: #fff; }
.menu a { display: flex; align-items: center; height: 33px; padding: 0 27px 2px 20px; border-left: 3px solid transparent; color: #b2bfdc; font-size: 14px; }
.menu a .icon { margin-left: auto; }
.menu a .wide { width: 17px; margin-right: -3px; }
.menu a.active { background: #2d3e63; border-left-color: #fff; color: #fff; font-weight: 500; }
.menu .endpoint { display: flex; align-items: center; justify-content: center; height: 33px; padding-bottom: 2px; gap: 3px; color: #fff; font-size: 11px; font-weight: 600; }
.endpoint .icon { width: 10px; height: 12px; }
.section { height: 33px; padding-left: 18px; color: #738bc0; font-size: 11px; line-height: 33px; }
.update { display: flex; align-items: center; gap: 4px; height: 40px; margin-top: auto; padding: 0 0 2px 19px; border-radius: 2px; background: #ff851b; color: #0e1a4f; font-size: 14px; white-space: nowrap; }
.update .icon { width: 22px; height: 18px; }
.side-foot { display: flex; align-items: center; height: 38px; padding: 3px 0 0 51px; }
.side-foot .crane { width: 18px; height: 26px; }
.side-foot .brand-name { margin-left: -2px; font-size: 14px; line-height: 18px; }
.version { margin-left: 12px; color: #fff; font-size: 11px; font-weight: 600; }

/* Page header */
.page-head { display: flex; justify-content: space-between; height: 55px; padding: 9px 23px 0 13px; background: #fff; }
h1 { display: flex; align-items: center; gap: 8px; font-size: 17px; line-height: 20px; }
.refresh { width: 16px; height: 16px; color: #337ab7; }
.crumb { font-size: 12px; line-height: 18px; }
.user-top { display: flex; align-items: center; justify-content: flex-end; gap: 14px; line-height: 20px; }
.support { display: flex; align-items: center; gap: 5px; font-size: 14px; }
.ring { width: 13px; height: 13px; color: #a8281e; }
.who { display: flex; align-items: center; gap: 4px; font-size: 17px; }
.who .icon { width: 16px; height: 16px; }
.user-links { display: flex; justify-content: flex-end; gap: 4px; font-size: 12px; line-height: 18px; }
.user-links a { text-decoration: underline; }
.user-links .icon { width: 11px; height: 11px; vertical-align: -1px; }
.user-links .logout { color: #a43832; }

/* Widgets */
.widget { margin: 14px 14px 14px 13px; border: 1px solid #e7e7e7; border-bottom-width: 2px; background: #fff; }
.widget-head { display: flex; align-items: center; gap: 8px; height: 46px; padding: 0 0 2px 14px; border-bottom: 1px solid #e9e9e9; background: #f6f6f6; color: #767676; font-size: 14px; }
.widget-head .icon { width: 13px; height: 13px; }
.pull { height: 237px; padding: 19px 18px 0 19px; }
.field { display: flex; margin-bottom: 4px; }
.field label { width: 136px; padding-top: 6px; font-weight: 700; }
.select { flex: 1; height: 31px; padding: 0 0 0 10px; border: 1px solid #ccc; border-radius: 4px; background: #fff; color: #555; font: 13px/18px Roboto, sans-serif; }
.group { flex: 1; display: flex; align-items: flex-start; }
.addon { height: 31px; padding: 0 11px; border: 1px solid #ccc; border-right: 0; border-radius: 4px 0 0 4px; background: #eee; color: #555; font-size: 14px; line-height: 28px; }
.group input { flex: 1; height: 32px; padding: 0 11px; border: 1px solid #ccc; font-size: 14px; }
.group input::placeholder { color: #999; }
.warning { display: flex; align-items: center; gap: 3px; margin-top: 11px; color: #f0ad4e; }
.warning .icon { width: 12px; height: 12px; }
.advanced { margin-top: 22px; }
.advanced a { display: flex; align-items: center; gap: 7px; }
.advanced .icon { width: 11px; height: 11px; }

.btn { display: flex; align-items: center; gap: 4px; height: 27px; padding: 0 8px; border: 1px solid #2e6da4; border-radius: 3px; color: #fff; font-size: 12px; font-weight: 700; white-space: nowrap; }
.primary { background: #337ab7; }
.danger { background: #d9534f; border-color: #d43f3a; }
.faded { opacity: .65; }
.btn .icon { width: 12px; height: 12px; }
.pull-btn { margin: 23px 0 0 4px; }
.btn-group { display: flex; }
.btn-group .btn:first-child { border-radius: 3px 0 0 3px; }
.btn-group .btn:last-child { border-radius: 0 3px 3px 0; border-left-width: 0; }
.export { gap: 6px; }
.caret { width: 0; border: 3px solid transparent; border-top-color: #fff; border-bottom-width: 0; }

/* Images table */
.table-head { display: flex; align-items: center; justify-content: space-between; height: 40px; padding: 2px 22px 0 18px; background: #f6f6f6; color: #767676; font-size: 14px; }
.table-head h2 { display: flex; align-items: center; gap: 5px; font-size: 14px; }
.table-settings { display: flex; align-items: center; gap: 4px; color: #767676; }
.table-settings .icon { width: 12px; height: 12px; }
.actions { display: flex; gap: 4px; height: 46px; padding: 9px 9px 0; border-bottom: 1px solid #d5d5d5; }
.actions > .btn-group:first-child { margin-right: 3px; }
.search { display: flex; align-items: center; gap: 8px; height: 36px; padding: 0 8px 2px 7px; border-bottom: 1px solid #d5d5d5; color: #767676; }
.search .icon { width: 13px; height: 13px; }
.search input { flex: 1; border: 0; outline: 0; font-size: 13px; }

.images { width: 100%; table-layout: fixed; border-collapse: collapse; }
.c-id { width: 420px; }
.c-size { width: 84px; }
.c-created { width: 168px; }
.images th { height: 50px; padding: 0 7px; background: #fafafa; text-align: left; font-size: 14px; font-weight: 400; }
.images td { height: 32px; padding: 0 7px; border-top: 1px solid #ddd; white-space: nowrap; }
.images input { width: 15px; height: 15px; margin: 0; flex: none; }
.id-head { display: flex; align-items: center; gap: 8px; color: #337ab7; font-size: 13px; }
.filter { display: flex; align-items: center; gap: 2px; color: #767676; font-size: 12px; }
.filter .icon { width: 13px; height: 13px; }
.sort { width: 14px; height: 14px; margin-left: -2px; vertical-align: -2px; fill: currentColor; font: 700 7px/7px Roboto, sans-serif; }
.id { display: flex; align-items: center; gap: 8px; }
.id a { width: 252px; font: 700 10px/16px "Liberation Mono", monospace; }
.label { display: inline-block; height: 18px; margin-right: 4px; padding: 0 6px; border-radius: 3px; background: #337ab7; color: #fff; font-size: 11px; line-height: 17px; font-weight: 900; vertical-align: middle; }
.unused { background: #f0ad4e; }
.marked { position: relative; background: #f5f5f5; }
.outline { position: absolute; top: -3px; right: -16px; bottom: -3px; left: 4px; border: 1px solid #f00; pointer-events: none; }
.table-foot { display: flex; align-items: center; justify-content: flex-end; gap: 8px; height: 45px; padding: 3px 27px 0; background: #f6f6f6; color: #767676; font-size: 12px; }
.table-foot .select { flex: none; width: 66px; }
```
